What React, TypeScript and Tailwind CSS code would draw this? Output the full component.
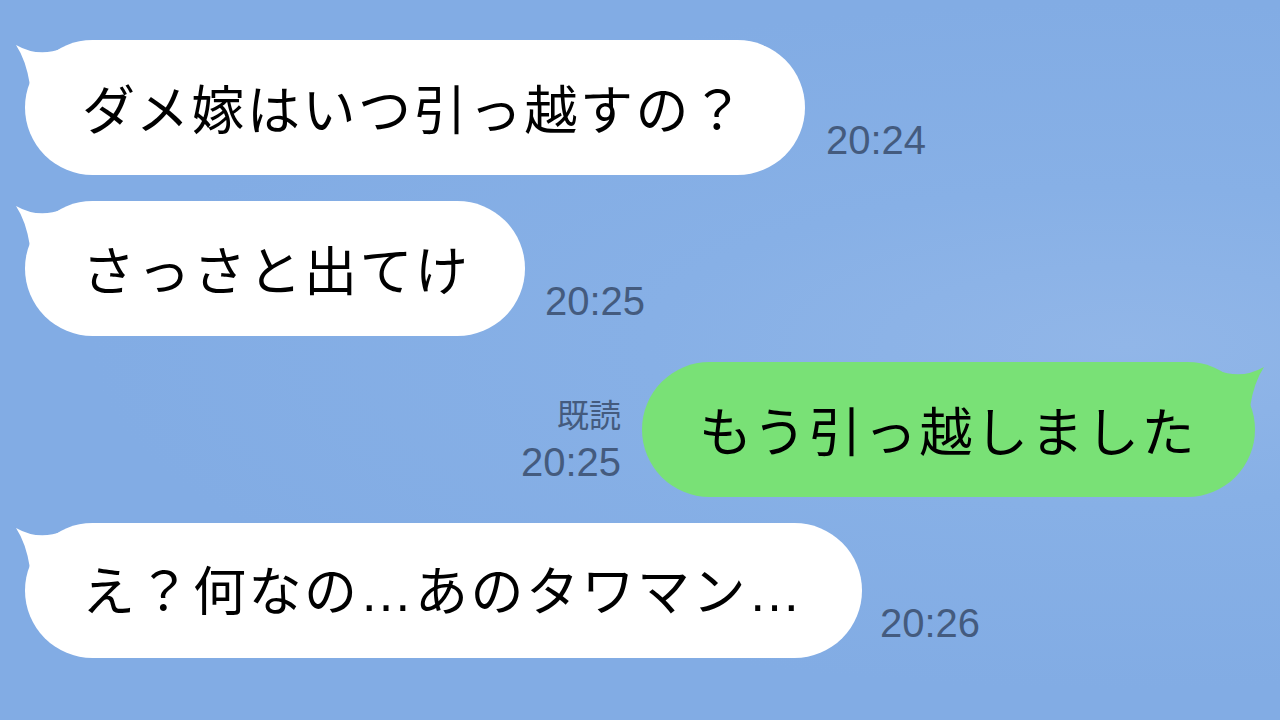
import React from "react";

const Tail = ({ color, flip }: { color: string; flip?: boolean }) => (
    <svg
        className={flip ? "absolute -right-[10px] top-0 w-[50px] h-[45px] -scale-x-100" : "absolute -left-[10px] top-0 w-[50px] h-[45px]"}
        viewBox="0 0 50 45"
    >
        <path d="M1 5 Q 24 18 48 8 L 48 45 L 15 45 Q 11 20 1 5 Z" fill={color} />
    </svg>
);

const Time = ({ children }: { children: React.ReactNode }) => (
    <span className="font-['Liberation_Sans',sans-serif] text-[40px] leading-none text-[#445b7e] mb-[15px]">
        {children}
    </span>
);

const Dots = () => <span className="font-['Liberation_Sans',sans-serif]">…</span>;

export default function App() {
    const bubble =
        "relative h-[135px] rounded-full flex items-center pl-[57px] text-[53px] tracking-[2.5px] text-black whitespace-nowrap";

    return (
        <div className="w-[1280px] h-[720px] overflow-hidden bg-[#83ade5] bg-[radial-gradient(ellipse_at_88%_48%,#91b6e8_0%,#87b0e6_30%,#82ace4_65%)] font-['Noto_Sans_CJK_JP',sans-serif]">
            <div className="flex flex-col gap-[26px] pt-[40px]">
                <div className="flex items-end gap-[21px] pl-[25px]">
                    <div className={`${bubble} bg-white w-[780px]`}>
                        <Tail color="#ffffff" />
                        <span className="relative">ダメ嫁はいつ引っ越すの？</span>
                    </div>
                    <Time>20:24</Time>
                </div>

                <div className="flex items-end gap-[20px] pl-[25px]">
                    <div className={`${bubble} bg-white w-[500px]`}>
                        <Tail color="#ffffff" />
                        <span className="relative">さっさと出てけ</span>
                    </div>
                    <Time>20:25</Time>
                </div>

                <div className="flex items-end justify-end gap-[21px] pr-[25px]">
                    <div className="flex flex-col items-end gap-[13px]">
                        <span className="text-[32px] leading-none text-[#445b7e]">既読</span>
                        <Time>20:25</Time>
                    </div>
                    <div className={`${bubble} bg-[#79e176] w-[613px] pl-[56px]`}>
                        <Tail color="#79e176" flip />
                        <span className="relative">もう引っ越しました</span>
                    </div>
                </div>

                <div className="flex items-end gap-[18px] pl-[25px]">
                    <div className={`${bubble} bg-white w-[837px]`}>
                        <Tail color="#ffffff" />
                        <span className="relative">
                            え？何なの<Dots />あのタワマン<Dots />
                        </span>
                    </div>
                    <Time>20:26</Time>
                </div>
            </div>
        </div>
    );
}
